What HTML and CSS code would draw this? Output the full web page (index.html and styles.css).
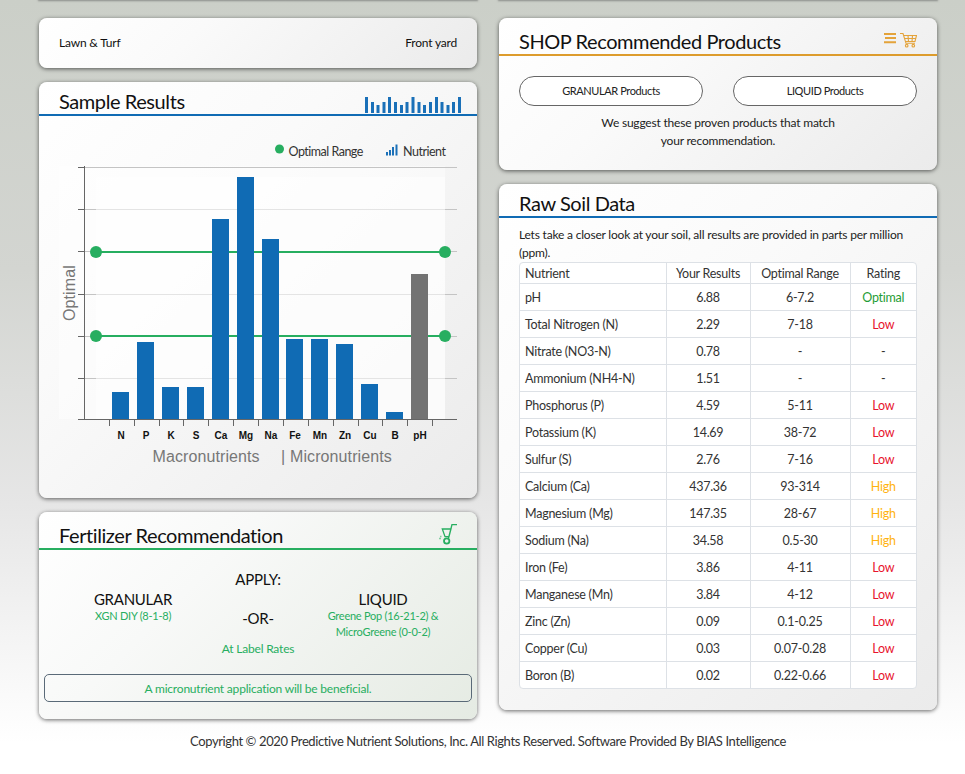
FILE: index.html
```html
<!DOCTYPE html>
<html lang="en">
<head>
<meta charset="utf-8">
<title>Soil Report</title>
<link rel="stylesheet" href="styles.css">
</head>
<body>
<div class="page">
  <div class="column">
    <div class="sliver"></div>
    <section class="card plain">
      <div class="sample-meta"><span>Lawn &amp; Turf</span><span>Front yard</span></div>
    </section>
    <section class="card">
      <header class="card-head head-blue">
        <h2>Sample Results</h2>
        <svg class="icon-bars" width="96" height="16" viewBox="0 0 96 16">
          <path d="M1.5 16V0M7.5 16V5M13 16V8M19 16V5M24.5 16V0M30.5 16V5M36.5 16V8M42 16V5M48 16V0M54 16V5M59.5 16V8M65.5 16V5M71.5 16V0M77 16V5M83 16V8M88.5 16V5M94.5 16V0"/>
        </svg>
      </header>
      <svg class="chart" width="438" height="382" viewBox="39 116 438 382">
        <rect class="band" x="59" y="166" width="386" height="253"/>
        <path class="grid" d="M78 167.5H457M78 209.5H457M78 251.5H457M78 294.5H457M78 336.5H457M78 378.5H457"/>
        <rect class="band-inner" x="96" y="177" width="349" height="242"/>
        <path class="axis" d="M84.5 166V419.5M78 167.5H84M78 209.5H84M78 251.5H84M78 294.5H84M78 336.5H84M78 378.5H84M78 419.5H457M109.5 419V426M134.5 419V426M159.5 419V426M183.5 419V426M208.5 419V426M233.5 419V426M258.5 419V426M283.5 419V426M308.5 419V426M333.5 419V426M358.5 419V426M382.5 419V426M407.5 419V426M432.5 419V426"/>
        <path class="range" d="M96 252H445M96 336H445"/>
        <circle class="dot" cx="96" cy="252" r="6"/><circle class="dot" cx="445" cy="252" r="6"/>
        <circle class="dot" cx="96" cy="336" r="6"/><circle class="dot" cx="445" cy="336" r="6"/>
        <g class="bars">
          <rect x="112" y="392" width="17" height="27"/>
          <rect x="137" y="342" width="17" height="77"/>
          <rect x="162" y="387" width="17" height="32"/>
          <rect x="187" y="387" width="17" height="32"/>
          <rect x="212" y="219" width="17" height="200"/>
          <rect x="237" y="177" width="17" height="242"/>
          <rect x="262" y="239" width="17" height="180"/>
          <rect x="286" y="339" width="17" height="80"/>
          <rect x="311" y="339" width="17" height="80"/>
          <rect x="336" y="344" width="17" height="75"/>
          <rect x="361" y="384" width="17" height="35"/>
          <rect x="386" y="412" width="17" height="7"/>
          <rect class="bar-ph" x="411" y="274" width="17" height="145"/>
        </g>
        <g class="tick-labels">
          <text x="121" y="439">N</text><text x="146" y="439">P</text><text x="171" y="439">K</text>
          <text x="196" y="439">S</text><text x="221" y="439">Ca</text><text x="246" y="439">Mg</text>
          <text x="271" y="439">Na</text><text x="295" y="439">Fe</text><text x="320" y="439">Mn</text>
          <text x="345" y="439">Zn</text><text x="370" y="439">Cu</text><text x="395" y="439">B</text>
          <text x="420" y="439">pH</text>
        </g>
        <text class="axis-title" x="152.5" y="462">Macronutrients</text>
        <text class="axis-title" x="281" y="462">|</text>
        <text class="axis-title" x="290" y="462">Micronutrients</text>
        <text class="axis-title" transform="translate(75 321) rotate(-90)">Optimal</text>
        <circle class="dot" cx="279.5" cy="149" r="4.5"/>
        <text class="legend" x="288.5" y="156">Optimal Range</text>
        <path class="legend-icon" d="M387 155.500V152M390 155.500V150M393 155.500V147M396.500 155.500V144.500"/>
        <text class="legend" x="403" y="156">Nutrient</text>
      </svg>
    </section>
    <section class="card card-green">
      <header class="card-head head-green">
        <h2>Fertilizer Recommendation</h2>
        <svg class="icon-spreader" width="19" height="21" viewBox="0 0 19 21">
          <path d="M19 0.500H14L10.300 15M4.300 5H13L11 12.700H7Z"/>
          <circle cx="8.700" cy="17" r="2.700"/>
          <path class="faint" d="M1 14.500H3M2 12.500H3.500"/>
        </svg>
      </header>
      <div class="rec-grid">
        <div class="rec-col rec-side">
          <h3>GRANULAR</h3>
          <p>XGN DIY (8-1-8)</p>
        </div>
        <div class="rec-col">
          <h3>APPLY:</h3>
          <h3 class="rec-or">-OR-</h3>
          <p class="rec-rate">At Label Rates</p>
        </div>
        <div class="rec-col rec-side">
          <h3>LIQUID</h3>
          <p>Greene Pop (16-21-2) &amp; MicroGreene (0-0-2)</p>
        </div>
      </div>
      <div class="alert">A micronutrient application will be beneficial.</div>
    </section>
  </div>
  <div class="column">
    <div class="sliver"></div>
    <section class="card">
      <header class="card-head head-orange">
        <h2>SHOP Recommended Products</h2>
        <svg class="icon-shop" width="33" height="15" viewBox="0 0 33 15">
          <path class="menu" d="M0 1H12M1 5H12M0 9.200H12"/>
          <path d="M16 0.500H19L22 10.300H31M20 2.500H32.500L31 8.500H21.500M24 2.500L24.500 8.500M28.500 2.500L28 8.500M20.800 5.500H31.800"/>
          <circle cx="22.700" cy="12.700" r="1.300"/><circle cx="29.300" cy="12.700" r="1.300"/>
        </svg>
      </header>
      <div class="shop-body">
        <div class="shop-buttons">
          <a class="pill">GRANULAR Products</a>
          <a class="pill">LIQUID Products</a>
        </div>
        <p class="shop-note">We suggest these proven products that match<br>your recommendation.</p>
      </div>
    </section>
    <section class="card">
      <header class="card-head head-blue">
        <h2>Raw Soil Data</h2>
      </header>
      <div class="raw-body">
        <p class="raw-intro">Lets take a closer look at your soil, all results are provided in parts per million (ppm).</p>
        <div class="table-wrap">
          <table>
            <colgroup><col class="c1"><col class="c2"><col class="c3"><col class="c4"></colgroup>
            <thead><tr><th>Nutrient</th><th>Your Results</th><th>Optimal Range</th><th>Rating</th></tr></thead>
            <tbody>
              <tr><td>pH</td><td>6.88</td><td>6-7.2</td><td class="optimal">Optimal</td></tr>
              <tr><td>Total Nitrogen (N)</td><td>2.29</td><td>7-18</td><td class="low">Low</td></tr>
              <tr><td>Nitrate (NO3-N)</td><td>0.78</td><td>-</td><td>-</td></tr>
              <tr><td>Ammonium (NH4-N)</td><td>1.51</td><td>-</td><td>-</td></tr>
              <tr><td>Phosphorus (P)</td><td>4.59</td><td>5-11</td><td class="low">Low</td></tr>
              <tr><td>Potassium (K)</td><td>14.69</td><td>38-72</td><td class="low">Low</td></tr>
              <tr><td>Sulfur (S)</td><td>2.76</td><td>7-16</td><td class="low">Low</td></tr>
              <tr><td>Calcium (Ca)</td><td>437.36</td><td>93-314</td><td class="high">High</td></tr>
              <tr><td>Magnesium (Mg)</td><td>147.35</td><td>28-67</td><td class="high">High</td></tr>
              <tr><td>Sodium (Na)</td><td>34.58</td><td>0.5-30</td><td class="high">High</td></tr>
              <tr><td>Iron (Fe)</td><td>3.86</td><td>4-11</td><td class="low">Low</td></tr>
              <tr><td>Manganese (Mn)</td><td>3.84</td><td>4-12</td><td class="low">Low</td></tr>
              <tr><td>Zinc (Zn)</td><td>0.09</td><td>0.1-0.25</td><td class="low">Low</td></tr>
              <tr><td>Copper (Cu)</td><td>0.03</td><td>0.07-0.28</td><td class="low">Low</td></tr>
              <tr><td>Boron (B)</td><td>0.02</td><td>0.22-0.66</td><td class="low">Low</td></tr>
            </tbody>
          </table>
        </div>
      </div>
    </section>
  </div>
  <footer class="footer">Copyright © 2020 Predictive Nutrient Solutions, Inc. All Rights Reserved. Software Provided By BIAS Intelligence</footer>
</div>
</body>
</html>
```
FILE: styles.css
```css
* { box-sizing: border-box; }
html, body { height: 100%; }
body {
  margin: 0;
  background: linear-gradient(#cbcfc8 0, #d3d5d1 35%, #e6e6e6 65%, #ffffff 96%);
  font-family: "Lato", "Open Sans", sans-serif;
  font-size: 12px;
  letter-spacing: -0.2px;
  color: #222;
  overflow: hidden;
}
.page {
  width: 898px;
  margin-left: 39px;
  display: grid;
  grid-template-columns: 438px 438px;
  column-gap: 22px;
  align-items: start;
}
.column { display: flex; flex-direction: column; gap: 14px; }
.sliver {
  height: 0;
  margin-bottom: 4px;
  box-shadow: 0 0 2px 1px rgba(80, 80, 80, .55);
}
.card {
  background: linear-gradient(135deg, #ffffff 0, #fafafa 35%, #ebebeb 100%);
  border-radius: 8px;
  box-shadow: 0 1px 4px 0 rgba(0, 0, 0, .6);
}
.card-green { background: linear-gradient(135deg, #ffffff 0, #f8f9f8 35%, #e5ebe3 100%); }
.plain { height: 50px; }
.sample-meta {
  height: 100%;
  padding: 0 20px 2px;
  display: flex;
  align-items: center;
  justify-content: space-between;
  color: #111;
}
.card-head {
  display: flex;
  justify-content: space-between;
  align-items: flex-end;
  padding: 0 16px 0 20px;
  height: 34px;
  border-bottom: 2px solid #106bb4;
}
.card-head h2 {
  margin: 0;
  font-size: 20px;
  font-weight: 400;
  line-height: 26px;
  letter-spacing: -0.42px;
  color: #111;
}
.head-blue { border-color: #106bb4; }
.head-green { height: 38px; border-color: #27ae60; padding-right: 20px; }
.head-orange { height: 38px; border-color: #dd9c2d; padding-right: 20px; }
.icon-bars { display: block; margin-bottom: 1px; }
.icon-bars path { stroke: #1a70b8; stroke-width: 3; fill: none; }
.icon-spreader { display: block; margin-bottom: 3px; }
.icon-spreader path { fill: none; stroke: #27ae60; stroke-width: 1.300; }
.icon-spreader circle { fill: none; stroke: #27ae60; stroke-width: 1.800; }
.icon-spreader .faint { opacity: .55; }
.icon-shop { display: block; margin-bottom: 6px; }
.icon-shop path, .icon-shop circle { fill: none; stroke: #e4a33a; stroke-width: 1.100; }
.icon-shop .menu { stroke-width: 2; }
.chart { display: block; }
.band { fill: #fff; opacity: .45; }
.band-inner { fill: #fff; opacity: .55; }
.grid { stroke: #c4c4c4; stroke-width: 1; fill: none; }
.axis { stroke: #666; stroke-width: 1; fill: none; }
.range { stroke: #27ae60; stroke-width: 2; fill: none; }
.dot { fill: #27ae60; }
.bars rect { fill: #106bb4; }
.bars .bar-ph { fill: #737373; }
.tick-labels text {
  font-family: "Liberation Sans", sans-serif;
  font-size: 10px;
  font-weight: 700;
  letter-spacing: 0;
  fill: #111;
  text-anchor: middle;
}
.axis-title {
  font-family: "Liberation Sans", sans-serif;
  font-size: 16px;
  letter-spacing: 0.1px;
  fill: #777;
}
.legend { font-size: 12.500px; letter-spacing: -0.5px; fill: #333; }
.legend-icon { stroke: #1a70b8; stroke-width: 2; fill: none; }
.rec-grid {
  display: grid;
  grid-template-columns: 148px 102px 148px;
  padding: 19px 20px 0;
  height: 124px;
  text-align: center;
}
.rec-col h3 {
  margin: 0;
  font-size: 15px;
  font-weight: 400;
  line-height: 20px;
  letter-spacing: -0.25px;
  color: #111;
}
.rec-col p {
  margin: 0;
  font-size: 11px;
  line-height: 16px;
  letter-spacing: -0.25px;
  color: #27ae60;
}
.rec-side { padding-top: 20px; }
.rec-side h3 { margin-bottom: -1px; }
.rec-or { margin-top: 19px !important; }
.rec-col .rec-rate { margin-top: 13px; font-size: 12px; letter-spacing: -0.2px; }
.alert {
  margin: 0 5px 17px;
  height: 28px;
  border: 1px solid #5a6a78;
  border-radius: 5px;
  display: flex;
  align-items: center;
  justify-content: center;
  color: #27ae60;
}
.shop-body { padding: 20px 20px 0; height: 114px; }
.shop-buttons { display: flex; justify-content: space-between; }
.pill {
  width: 184px;
  height: 30px;
  padding-bottom: 1px;
  border: 1px solid #666;
  border-radius: 15px;
  background: #fff;
  display: flex;
  align-items: center;
  justify-content: center;
  font-size: 11px;
  letter-spacing: -0.4px;
  color: #222;
}
.shop-note { margin: 8px 0 0; text-align: center; line-height: 18px; color: #222; }
.raw-body { padding: 8px 20px 21px; }
.raw-intro { margin: 0; line-height: 18px; color: #222; }
.table-wrap {
  border: 1px solid #dde1e6;
  border-radius: 4px;
  background: #fff;
  overflow: hidden;
}
table { width: 100%; border-collapse: collapse; table-layout: fixed; font-size: 12.500px; letter-spacing: -0.25px; }
.c1 { width: 146px; }
.c2 { width: 84px; }
.c3 { width: 100px; }
th, td {
  padding: 1px 0 0;
  border: 1px solid #dde1e6;
  text-align: center;
  font-weight: 400;
  color: #333;
}
th { height: 20px; }
td { height: 27px; }
tr > :first-child { text-align: left; padding-left: 5px; border-left: 0; }
tr > :last-child { border-right: 0; }
thead th { border-top: 0; }
tbody tr:last-child td { border-bottom: 0; }
td.optimal { color: #1f9d36; }
td.low { color: #e8142e; }
td.high { color: #ffb30f; }
.footer {
  grid-column: 1 / -1;
  margin-top: 13px;
  text-align: center;
  line-height: 18px;
  font-size: 13px;
  letter-spacing: -0.39px;
  color: #333;
}
```
